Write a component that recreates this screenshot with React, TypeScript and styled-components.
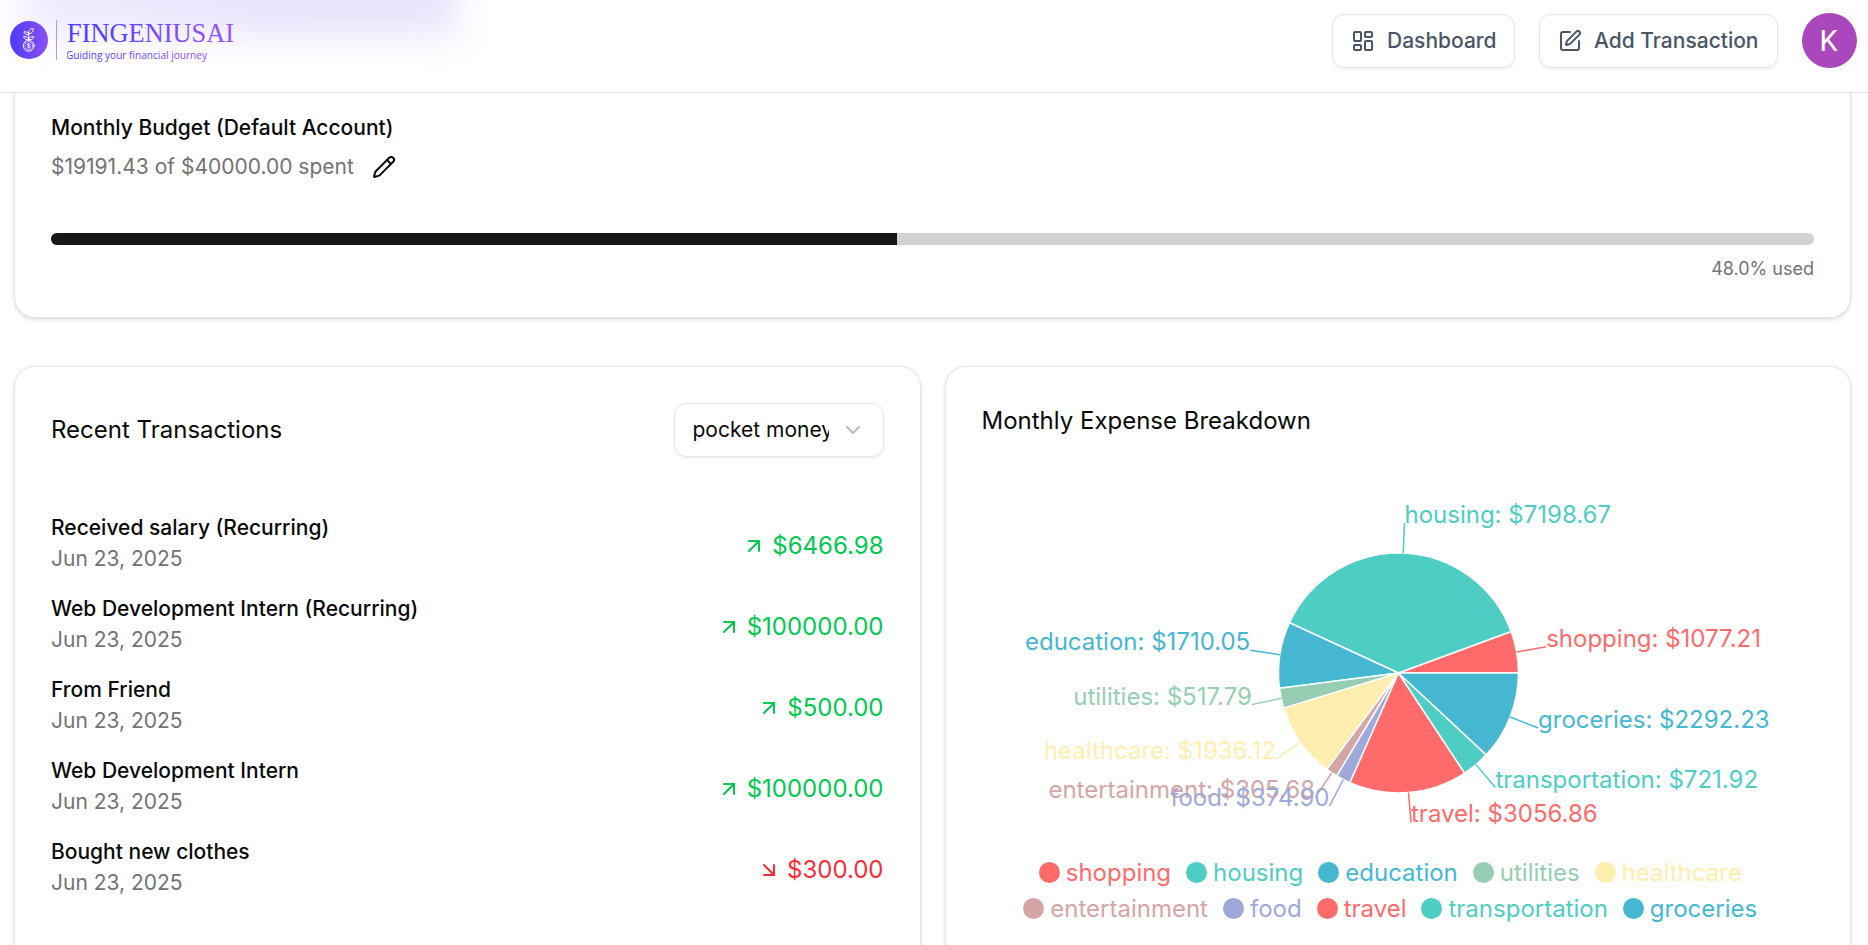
import React from "react";
import styled, { createGlobalStyle } from "styled-components";
import { ArrowUpRight, ArrowDownRight, ChevronDown, LayoutDashboard, Pencil, PenBox } from "lucide-react";

const GlobalStyle = createGlobalStyle`
  * { box-sizing: border-box; }
  html, body { margin: 0; height: 100%; overflow: hidden; background: #fff; }
  body { font-family: Inter, "Liberation Sans", sans-serif; color: #0a0a0a; }
  p, h1, h2 { margin: 0; }
`;

const Page = styled.div`
  width: 100%;
  height: 945px;
  overflow: hidden;
  display: flex;
  flex-direction: column;
`;

const Header = styled.header`
  position: relative;
  flex: none;
  height: 93px;
  border-bottom: 1px solid #e2e2e2;
  background: #fff;
  overflow: hidden;
  display: flex;
  justify-content: space-between;
  padding: 13px 11px 0 10px;
`;

const Glow = styled.div`
  position: absolute;
  left: 18px;
  top: -50px;
  width: 440px;
  height: 86px;
  background: linear-gradient(90deg, #efeefe, #e7e5fc 55%, #e9e5fc);
  filter: blur(17px);
`;

const Brand = styled.div`
  position: relative;
  display: flex;
  height: 54px;
`;

const BrandMark = styled.svg`
  width: 38px;
  height: 38px;
  margin-top: 8px;
`;

const BrandRule = styled.div`
  width: 1px;
  height: 40px;
  margin: 7px 10px 0 8px;
  background: #a99bff;
`;

const BrandText = styled.svg`
  width: 180px;
  height: 54px;
`;

const Actions = styled.div`
  position: relative;
  display: flex;
  align-items: center;
  gap: 24px;
  height: 55px;
`;

const OutlineButton = styled.button<{ $width: number }>`
  display: flex;
  align-items: center;
  gap: 12px;
  width: ${(p) => p.$width}px;
  height: 54px;
  padding: 0 0 0 18px;
  border: 1px solid #e5e5e5;
  border-radius: 12px;
  background: #fff;
  box-shadow: 0 1.5px 3px rgba(0, 0, 0, 0.05);
  color: #4a5565;
  font: 500 21px Inter, sans-serif;
  white-space: nowrap;
`;

const Avatar = styled.div`
  width: 55px;
  height: 55px;
  border-radius: 50%;
  background: #ab47bc;
  color: #fff;
  display: flex;
  align-items: center;
  justify-content: center;
  padding-right: 2px;
  font: 400 29px Roboto, sans-serif;
`;

const Main = styled.main`
  flex: 1;
  min-height: 0;
  overflow: hidden;
  display: flex;
  flex-direction: column;
  gap: 48px;
  padding: 0 17px 0 14px;
`;

const Card = styled.section`
  border: 1px solid #e5e5e5;
  border-radius: 21px;
  background: #fff;
  box-shadow: 0 1.5px 4.5px rgba(0, 0, 0, 0.1), 0 1.5px 3px -1.5px rgba(0, 0, 0, 0.1);
`;

const BudgetCard = styled(Card)`
  flex: none;
  height: 225px;
  border-top: 0;
  border-radius: 0 0 21px 21px;
  padding: 24px 36px 0;
`;

const BudgetTitle = styled.h2`
  font-size: 21px;
  font-weight: 500;
  line-height: 21px;
`;

const BudgetLine = styled.div`
  display: flex;
  align-items: center;
  gap: 18px;
  height: 54px;
  margin-top: 2px;
  color: #737373;
  font-size: 21px;
  svg { color: #0a0a0a; }
`;

const BudgetText = styled.p`
  padding-bottom: 2px;
`;

const Track = styled.div`
  height: 12px;
  margin-top: 39px;
  border-radius: 6px;
  background: #d1d1d1;
  overflow: hidden;
`;

const Fill = styled.div`
  height: 100%;
  background: #171717;
`;

const Used = styled.p`
  margin-top: 12px;
  text-align: right;
  font-size: 18px;
  line-height: 24px;
  color: #737373;
`;

const Columns = styled.div`
  flex: none;
  display: grid;
  grid-template-columns: 1fr 1fr;
  gap: 24px;
  height: 640px;
`;

const Panel = styled(Card)`
  padding: 36px 36px 0;
`;

const PanelHead = styled.div`
  display: flex;
  align-items: center;
  justify-content: space-between;
  height: 54px;
`;

const PanelTitle = styled.h2`
  font-size: 24px;
  font-weight: 400;
  line-height: 36px;
`;

const Select = styled.div`
  display: flex;
  align-items: center;
  justify-content: space-between;
  width: 210px;
  height: 54px;
  padding: 0 18px;
  border: 1px solid #e5e5e5;
  border-radius: 12px;
  box-shadow: 0 1.5px 3px rgba(0, 0, 0, 0.05);
  font-size: 21px;
  svg { color: #b9b9b9; }
`;

const SelectValue = styled.span`
  width: 136.5px;
  overflow: hidden;
  white-space: nowrap;
  line-height: 30px;
`;

const List = styled.div`
  display: flex;
  flex-direction: column;
  gap: 18px;
  margin-top: 57px;
`;

const Row = styled.div`
  display: flex;
  align-items: center;
  justify-content: space-between;
  height: 63px;
`;

const RowName = styled.p`
  font-size: 21px;
  font-weight: 500;
  line-height: 30px;
`;

const RowDate = styled.p`
  margin-bottom: 3px;
  font-size: 21px;
  line-height: 32px;
  color: #737373;
`;

const Amount = styled.div<{ $up: boolean }>`
  display: flex;
  align-items: center;
  gap: 6px;
  font-size: 24px;
  color: ${(p) => (p.$up ? "#00c951" : "#fb2c36")};
`;

const Chart = styled.svg`
  display: block;
  width: 832px;
  height: 370px;
  margin-top: 38px;
  overflow: visible;
  font-size: 24px;
`;

const Legend = styled.div`
  display: flex;
  flex-direction: column;
  align-items: center;
  margin-top: 7px;
`;

const LegendRow = styled.div`
  display: flex;
  height: 36px;
`;

const LegendItem = styled.div<{ $color: string }>`
  display: flex;
  align-items: center;
  gap: 6px;
  margin-right: 15px;
  font-size: 24px;
  color: ${(p) => p.$color};
`;

const Dot = styled.span`
  width: 21px;
  height: 21px;
  margin-top: 1px;
  border-radius: 50%;
  background: currentColor;
`;

const transactions = [
  { name: "Received salary (Recurring)", amount: "$6466.98", up: true },
  { name: "Web Development Intern (Recurring)", amount: "$100000.00", up: true },
  { name: "From Friend", amount: "$500.00", up: true },
  { name: "Web Development Intern", amount: "$100000.00", up: true },
  { name: "Bought new clothes", amount: "$300.00", up: false },
];

const palette = ["#FF6B6B", "#4ECDC4", "#45B7D1", "#96CEB4", "#FFEEAD", "#D4A5A5", "#9FA8DA"];

const expenses = [
  { name: "shopping", value: 1077.21 },
  { name: "housing", value: 7198.67 },
  { name: "education", value: 1710.05 },
  { name: "utilities", value: 517.79 },
  { name: "healthcare", value: 1936.12 },
  { name: "entertainment", value: 305.68 },
  { name: "food", value: 374.9 },
  { name: "travel", value: 3056.86 },
  { name: "transportation", value: 721.92 },
  { name: "groceries", value: 2292.23 },
].map((e, i) => ({ ...e, color: palette[i % palette.length] }));

const CX = 416.5;
const CY = 196;
const R = 120;

const at = (angle: number, radius: number) => ({
  x: CX + radius * Math.cos(angle),
  y: CY - radius * Math.sin(angle),
});

function PieChart() {
  const total = expenses.reduce((sum, e) => sum + e.value, 0);
  let start = 0;
  const slices = expenses.map((e) => {
    const end = start + (e.value / total) * Math.PI * 2;
    const slice = { ...e, start, end, mid: (start + end) / 2 };
    start = end;
    return slice;
  });
  return (
    <Chart viewBox="0 0 832 370">
      {slices.map((s) => {
        const a = at(s.start, R);
        const b = at(s.end, R);
        return (
          <path
            key={s.name}
            d={`M${CX} ${CY}L${a.x} ${a.y}A${R} ${R} 0 0 0 ${b.x} ${b.y}Z`}
            fill={s.color}
            stroke="#fff"
            strokeWidth="1.5"
          />
        );
      })}
      {slices.map((s) => {
        const a = at(s.mid, R);
        const b = at(s.mid, R + 30);
        return (
          <g key={s.name}>
            <path d={`M${a.x} ${a.y}L${b.x} ${b.y}`} stroke={s.color} strokeWidth="1.5" />
            <text x={b.x} y={b.y} fill={s.color} textAnchor={b.x > CX ? "start" : "end"}>
              {`${s.name}: $${s.value.toFixed(2)}`}
            </text>
          </g>
        );
      })}
    </Chart>
  );
}

function Logo() {
  return (
    <Brand>
      <BrandMark viewBox="0 0 38 38" fill="none">
        <defs>
          <linearGradient id="mark" x1="0" y1="0" x2="1" y2="0">
            <stop offset="0" stopColor="#4a3cff" />
            <stop offset="1" stopColor="#8d50f8" />
          </linearGradient>
        </defs>
        <circle cx="19" cy="19" r="19" fill="url(#mark)" />
        <g stroke="#fff" strokeWidth="1" strokeLinecap="round">
          <circle cx="18.7" cy="24.8" r="5.4" />
          <circle cx="18.7" cy="24.8" r="3.9" strokeWidth=".5" />
          <path d="M20.3 23.6c-.6-.8-3-.8-3 .3s3 .8 3 1.900-2.400 1.100-3 .3M18.700 22.200v5.200" strokeWidth=".8" />
          <path d="M18.700 19.300v-8" />
          <path d="M18.700 18.500c-3.500.5-5-1-5-3 3 0 5 1 5 3zM18.700 18.500c3.500.5 5-1 5-3-3 0-5 1-5 3zM18.700 13.500c-3.300.4-4.500-1-4.500-2.800 2.700 0 4.500.8 4.500 2.800zM18.700 12.500c3 .4 4.800-1.800 4.500-5-3 0-5 2-4.500 5z" />
        </g>
      </BrandMark>
      <BrandRule />
      <BrandText>
        <defs>
          <linearGradient id="word" gradientUnits="userSpaceOnUse" x1="0" y1="0" x2="168" y2="0">
            <stop offset="0" stopColor="#4a3cff" />
            <stop offset="1" stopColor="#9a55fb" />
          </linearGradient>
        </defs>
        <text x="0" y="29" fill="url(#word)" fontFamily="'Liberation Serif', serif" fontSize="28" textLength="167" lengthAdjust="spacingAndGlyphs">
          FINGENIUSAI
        </text>
        <text x="-1" y="46" fill="url(#word)" fontFamily="'Open Sans', sans-serif" fontSize="11" textLength="141" lengthAdjust="spacingAndGlyphs">
          Guiding your financial journey
        </text>
      </BrandText>
    </Brand>
  );
}

export default function App() {
  return (
    <Page>
      <GlobalStyle />
      <Header>
        <Glow />
        <Logo />
        <Actions>
          <OutlineButton $width={183}>
            <LayoutDashboard size={24} />
            Dashboard
          </OutlineButton>
          <OutlineButton $width={239}>
            <PenBox size={24} />
            Add Transaction
          </OutlineButton>
          <Avatar>K</Avatar>
        </Actions>
      </Header>
      <Main>
        <BudgetCard>
          <BudgetTitle>Monthly Budget (Default Account)</BudgetTitle>
          <BudgetLine>
            <BudgetText>$19191.43 of $40000.00 spent</BudgetText>
            <Pencil size={24} />
          </BudgetLine>
          <Track>
            <Fill style={{ width: `${(19191.43 / 40000) * 100}%` }} />
          </Track>
          <Used>48.0% used</Used>
        </BudgetCard>
        <Columns>
          <Panel>
            <PanelHead>
              <PanelTitle>Recent Transactions</PanelTitle>
              <Select>
                <SelectValue>pocket money</SelectValue>
                <ChevronDown size={24} />
              </Select>
            </PanelHead>
            <List>
              {transactions.map((t, i) => (
                <Row key={i}>
                  <div>
                    <RowName>{t.name}</RowName>
                    <RowDate>Jun 23, 2025</RowDate>
                  </div>
                  <Amount $up={t.up}>
                    {t.up ? <ArrowUpRight size={24} /> : <ArrowDownRight size={24} />}
                    {t.amount}
                  </Amount>
                </Row>
              ))}
            </List>
          </Panel>
          <Panel>
            <PanelTitle>Monthly Expense Breakdown</PanelTitle>
            <PieChart />
            <Legend>
              {[expenses.slice(0, 5), expenses.slice(5)].map((row, i) => (
                <LegendRow key={i}>
                  {row.map((e) => (
                    <LegendItem key={e.name} $color={e.color}>
                      <Dot />
                      {e.name}
                    </LegendItem>
                  ))}
                </LegendRow>
              ))}
            </Legend>
          </Panel>
        </Columns>
      </Main>
    </Page>
  );
}
